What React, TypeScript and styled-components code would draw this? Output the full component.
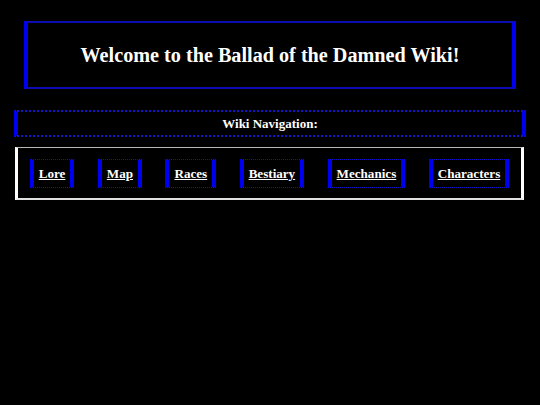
import React from "react";
import styled, { createGlobalStyle } from "styled-components";

const GlobalStyle = createGlobalStyle`
  html, body {
    background: #000000;
  }
  body {
    margin: 8px;
    font-family: "Liberation Serif", "Times New Roman", serif;
    color: #ffffff;
  }
`;

const Header = styled.header`
  margin: 13px 16px 0;
  padding: 20px 8px;
  border-style: solid;
  border-color: #0c0cb4 #0000f0;
  border-width: 2px 4px;
  text-align: center;
`;

const Title = styled.h1`
  margin: 0;
  font-size: 20.2px;
  line-height: 24px;
  font-weight: bold;
  color: #ffffff;
`;

const NavBar = styled.div`
  margin: 21px 6px 0;
  padding: 4px 8px 3px;
  border-style: dotted solid;
  border-color: #1414c8 #0000f0;
  border-width: 2px 4px;
  text-align: center;
`;

const NavTitle = styled.h2`
  margin: 0;
  font-size: 13px;
  line-height: 16px;
  font-weight: bold;
`;

const NavPanel = styled.nav`
  margin: 10px 8px 0 7px;
  padding: 11px 0 10px;
  border-style: solid;
  border-color: #b8b8b8 #ffffff #e0e0e0;
  border-width: 1px 3px 2px;
`;

const LinkList = styled.ul`
  margin: 0;
  padding: 0;
  list-style: none;
  display: flex;
  justify-content: space-around;
`;

const LinkItem = styled.li`
  padding: 5px 5px;
  border-style: dotted solid;
  border-color: #1414c8 #0000f0;
  border-width: 1px 4px;
`;

const WikiLink = styled.a`
  display: block;
  font-size: 13.1px;
  line-height: 16px;
  padding-top: 1px;
  font-weight: bold;
  color: #ffffff;
  text-decoration: underline;
`;

const links = ["Lore", "Map", "Races", "Bestiary", "Mechanics", "Characters"];

const App = () => {
  return (
    <>
      <GlobalStyle />
      <Header>
        <Title>Welcome to the Ballad of the Damned Wiki!</Title>
      </Header>
      <NavBar>
        <NavTitle>Wiki Navigation:</NavTitle>
      </NavBar>
      <NavPanel>
        <LinkList>
          {links.map((link: string) => (
            <LinkItem key={link}>
              <WikiLink href="#">{link}</WikiLink>
            </LinkItem>
          ))}
        </LinkList>
      </NavPanel>
    </>
  );
};

export default App;
